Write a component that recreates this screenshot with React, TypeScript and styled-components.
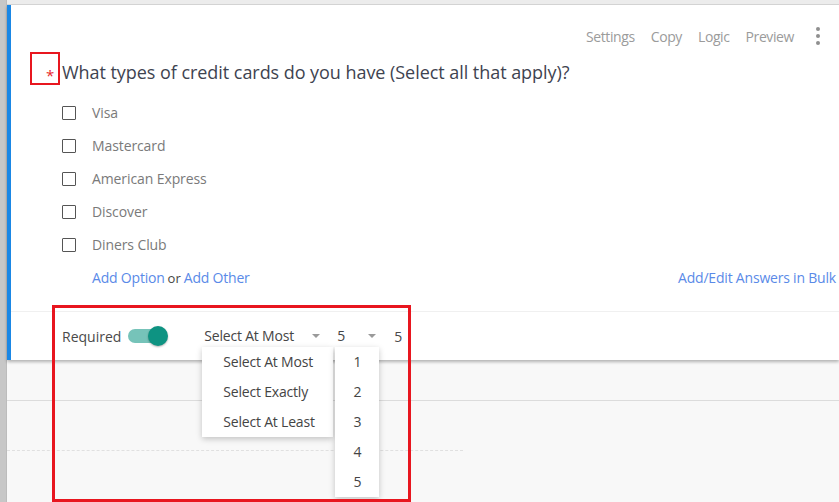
import React from 'react';
import styled, { createGlobalStyle } from 'styled-components';

const GlobalStyle = createGlobalStyle`
    html, body {
        margin: 0;
        padding: 0;
        background: #f8f8f8;
        font-family: 'Open Sans', 'Noto Sans', sans-serif;
        overflow: hidden;
    }
`;

const SPage = styled.div`
    position: relative;
    display: flex;
    width: 839px;
    height: 502px;
    overflow: hidden;
`;

const SRail = styled.div`
    width: 6px;
    flex-shrink: 0;
    background: #c7c7c7;
    border-right: 1px solid #bcbcbc;
`;

const SMain = styled.div`
    flex: 1;
    display: flex;
    flex-direction: column;
    min-width: 0;
`;

const STopStrip = styled.div`
    height: 4px;
    background: #ececec;
    border-bottom: 1px solid #d6d6d6;
`;

const SCard = styled.section`
    background: #fff;
    border-left: 4px solid #1a87e5;
    box-shadow: 0 2px 3px rgba(0, 0, 0, 0.28);
    position: relative;
    z-index: 1;
`;

const SHeader = styled.div`
    display: flex;
    justify-content: flex-end;
    align-items: center;
    gap: 16px;
    height: 20px;
    margin-top: 21px;
    padding-right: 19px;
`;

const SHeaderLink = styled.span`
    font-size: 14px;
    color: #9b9b9b;
    letter-spacing: -0.4px;
`;

const SKebab = styled.span`
    display: flex;
    flex-direction: column;
    gap: 3px;
    margin-left: 6px;

    i {
        width: 4px;
        height: 4px;
        border-radius: 50%;
        background: #8f8f8f;
    }
`;

const SQuestion = styled.h2`
    display: flex;
    align-items: center;
    margin: 13px 0 0;
    padding-left: 35px;
    height: 26px;
    font-weight: 400;
    font-size: 18px;
    letter-spacing: -0.05px;
    color: #3e4350;
`;

const SAsterisk = styled.span`
    color: #e8262b;
    font-size: 15px;
    width: 16px;
    padding-top: 6px;
`;

const SOptions = styled.ul`
    list-style: none;
    margin: 11px 0 0;
    padding: 0 0 0 51px;
`;

const SOption = styled.li`
    display: flex;
    align-items: center;
    gap: 16px;
    height: 33px;
    font-size: 14px;
    color: #7a7a7a;
    letter-spacing: -0.1px;
`;

const SCheckbox = styled.span`
    width: 12px;
    height: 12px;
    border: 1.5px solid #555;
    border-radius: 1px;
`;

const SLinksRow = styled.div`
    display: flex;
    justify-content: space-between;
    align-items: center;
    height: 33px;
    padding: 0 3px 0 81px;
    font-size: 14px;
`;

const SLink = styled.span`
    color: #5a8ae8;
    letter-spacing: -0.2px;
`;

const SOr = styled.span`
    color: #444;
    font-size: 13px;
    margin: 0 3px;
`;

const SFooter = styled.div`
    display: flex;
    align-items: center;
    height: 48px;
    margin-top: 17px;
    border-top: 1px solid #f0f0f0;
    padding-left: 51px;
    font-size: 14px;
    color: #4a4a4a;
`;

const SToggle = styled.span`
    position: relative;
    display: inline-block;
    width: 38px;
    height: 14px;
    border-radius: 7px;
    background: #76c3b9;
    margin: 0 36px 0 7px;

    &::after {
        content: '';
        position: absolute;
        right: -2px;
        top: -3px;
        width: 20px;
        height: 20px;
        border-radius: 50%;
        background: #0e9382;
        box-shadow: 0 1px 2px rgba(0, 0, 0, 0.3);
    }
`;

const SSelectWrap = styled.div<{ $width: number }>`
    position: relative;
    width: ${({ $width }) => $width}px;
    margin-right: 13px;
`;

const SSelect = styled.div`
    display: flex;
    justify-content: space-between;
    align-items: center;
    height: 22px;
    padding: 0 2px;
    border-bottom: 1px solid #8a8a8a;
    color: #454545;
    letter-spacing: -0.2px;

    &::after {
        content: '';
        border-left: 4px solid transparent;
        border-right: 4px solid transparent;
        border-top: 4px solid #9a9a9a;
    }
`;

const SMenu = styled.ul<{ $width: number; $center?: boolean }>`
    position: absolute;
    top: 22px;
    left: 0;
    width: ${({ $width }) => $width}px;
    margin: 0;
    padding: 0;
    list-style: none;
    background: #fff;
    box-shadow: 0 2px 6px rgba(0, 0, 0, 0.22);
    z-index: 3;

    li {
        height: 30px;
        line-height: 30px;
        padding-left: ${({ $center }) => ($center ? 0 : 21)}px;
        text-align: ${({ $center }) => ($center ? 'center' : 'left')};
        color: #444;
        white-space: nowrap;
        letter-spacing: -0.2px;
    }
`;

const SCount = styled.span`
    color: #4a4a4a;
    margin-left: 3px;
`;

const SBelow = styled.div`
    height: 40px;
    border-bottom: 1px solid #dcdcdc;
`;

const SDashed = styled.div`
    margin-top: 49px;
    width: 456px;
    border-top: 1px dashed #e0e0e0;
`;

const SMark = styled.div<{ $x: number; $y: number; $w: number; $h: number; $b: number }>`
    position: absolute;
    left: ${({ $x }) => $x}px;
    top: ${({ $y }) => $y}px;
    width: ${({ $w }) => $w}px;
    height: ${({ $h }) => $h}px;
    border: ${({ $b }) => $b}px solid #e8161f;
    box-sizing: border-box;
    z-index: 5;
`;

const options = ['Visa', 'Mastercard', 'American Express', 'Discover', 'Diners Club'];

export default function App() {
    return (
        <>
            <GlobalStyle />
            <SPage>
                <SRail />
                <SMain>
                    <STopStrip />
                    <SCard>
                        <SHeader>
                            <SHeaderLink>Settings</SHeaderLink>
                            <SHeaderLink>Copy</SHeaderLink>
                            <SHeaderLink>Logic</SHeaderLink>
                            <SHeaderLink>Preview</SHeaderLink>
                            <SKebab>
                                <i />
                                <i />
                                <i />
                            </SKebab>
                        </SHeader>
                        <SQuestion>
                            <SAsterisk>*</SAsterisk>
                            What types of credit cards do you have (Select all that apply)?
                        </SQuestion>
                        <SOptions>
                            {options.map((o) => (
                                <SOption key={o}>
                                    <SCheckbox />
                                    {o}
                                </SOption>
                            ))}
                        </SOptions>
                        <SLinksRow>
                            <span>
                                <SLink>Add Option</SLink>
                                <SOr>or</SOr>
                                <SLink>Add Other</SLink>
                            </span>
                            <SLink>Add/Edit Answers in Bulk</SLink>
                        </SLinksRow>
                        <SFooter>
                            Required
                            <SToggle />
                            <SSelectWrap $width={120}>
                                <SSelect>Select At Most</SSelect>
                                <SMenu $width={131}>
                                    <li>Select At Most</li>
                                    <li>Select Exactly</li>
                                    <li>Select At Least</li>
                                </SMenu>
                            </SSelectWrap>
                            <SSelectWrap $width={43}>
                                <SSelect>5</SSelect>
                                <SMenu $width={44} $center>
                                    {[1, 2, 3, 4, 5].map((n) => (
                                        <li key={n}>{n}</li>
                                    ))}
                                </SMenu>
                            </SSelectWrap>
                            <SCount>5</SCount>
                        </SFooter>
                    </SCard>
                    <SBelow />
                    <SDashed />
                </SMain>
                <SMark $x={30} $y={52} $w={30} $h={33} $b={2} />
                <SMark $x={52} $y={305} $w={359} $h={197} $b={3} />
            </SPage>
        </>
    );
}
